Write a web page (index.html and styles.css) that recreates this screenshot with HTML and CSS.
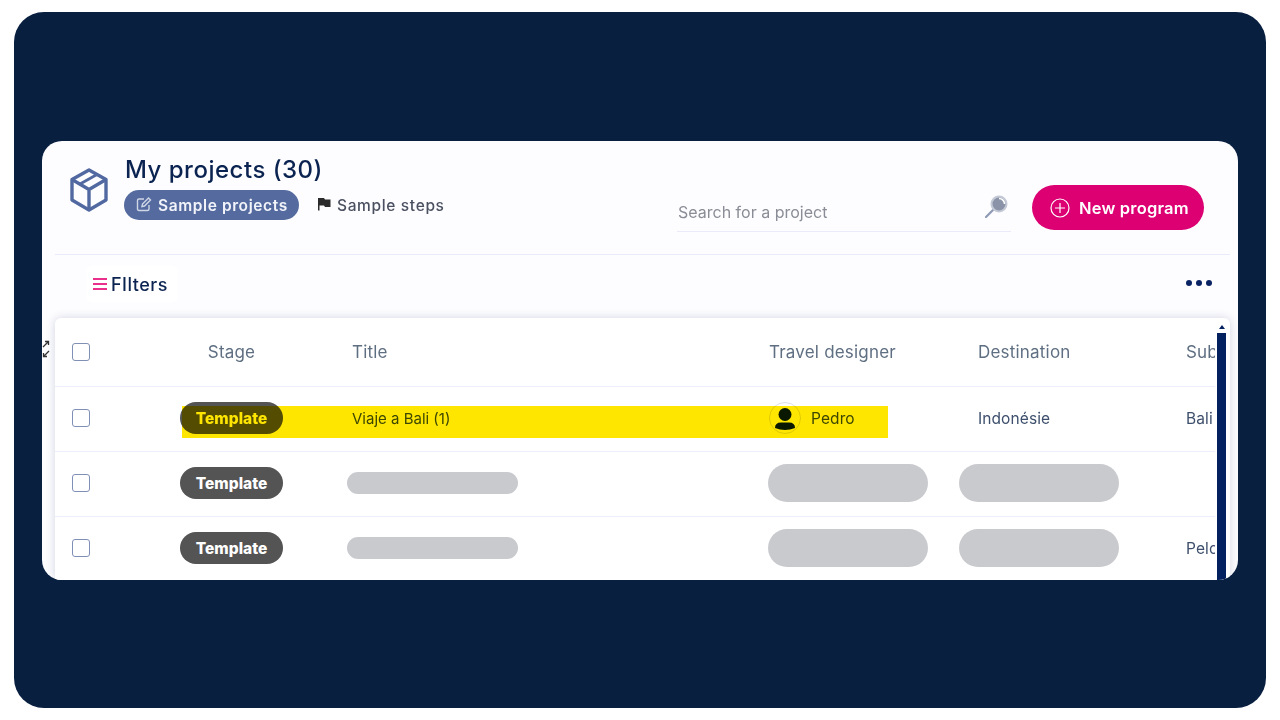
FILE: index.html

```html
<!DOCTYPE html>
<html lang="en">
<head>
  <meta charset="UTF-8" />
  <title>My projects</title>
  <link rel="stylesheet" href="styles.css">
</head>
<body>
  <div class="frame">
    <div class="card">
      <div class="header">
        <svg class="box-icon" viewBox="0 0 38 44" fill="none" stroke="#5169a0" stroke-width="3.400" stroke-linejoin="round">
          <path d="M19 2 L36 11.500 V32 L19 42 L2 32 V11.500 Z"/>
          <path d="M2 11.500 L19 21.500 L36 11.500 M19 21.500 V42"/>
          <path d="M10 16 L27 6.500" stroke-width="2.800"/>
        </svg>
        <div class="heading">
          <h1>My projects (30)</h1>
          <div class="tabs">
            <span class="tab active">
              <svg class="tab-icon" viewBox="0 0 16 16" fill="none" stroke="#cfd6e6" stroke-width="1.400">
                <path d="M13 9 V13 Q13 14.500 11.500 14.500 H3 Q1.500 14.500 1.500 13 V4.500 Q1.500 3 3 3 H8"/>
                <path d="M6 10.500 L6.500 8 L12.500 2 L14.500 4 L8.500 10 Z"/>
              </svg>
              Sample projects
            </span>
            <span class="tab">
              <svg class="flag-icon" viewBox="0 0 14 14"><path d="M1 1 H7 L8 2.500 H13.500 V10 H8 L7 8.500 H2.500 V13.500 H1 Z" fill="#2b2b2b"/></svg>
              Sample steps
            </span>
          </div>
        </div>
        <div class="search">
          <span class="search-text">Search for a project</span>
          <svg class="search-icon" viewBox="0 0 24 24" fill="none">
            <path d="M2 22 L10 14" stroke="#8d9ab5" stroke-width="2.200" stroke-linecap="round"/>
            <circle cx="15" cy="9" r="7.500" fill="#8b93a8" stroke="#c4c9d6" stroke-width="2"/>
            <path d="M15 3.500 A5.500 5.500 0 0 1 20.500 9" stroke="#fff" stroke-width="1.500"/>
          </svg>
        </div>
        <button class="new-btn">
          <svg class="plus-icon" viewBox="0 0 20 20" fill="none" stroke="#fff" stroke-width="1.200">
            <circle cx="10" cy="10" r="9"/>
            <path d="M10 5 V15 M5 10 H15"/>
          </svg>
          New program
        </button>
      </div>

      <div class="toolbar">
        <div class="filters">
          <span class="burger"><i></i><i></i><i></i></span>
          FIlters
        </div>
        <div class="dots"><i></i><i></i><i></i></div>
      </div>

      <div class="table-wrap">
        <span class="expand">
          <svg viewBox="0 0 8 18" fill="none" stroke="#333" stroke-width="1.300">
            <path d="M1 7 L6 2 M3 1.500 H6.500 V5"/>
            <path d="M7 11 L2 16 M5 16.500 H1.500 V13"/>
          </svg>
        </span>
        <div class="table">
          <div class="row head">
            <div class="cell"><span class="check"></span></div>
            <div class="cell center">Stage</div>
            <div class="cell">Title</div>
            <div class="cell">Travel designer</div>
            <div class="cell">Destination</div>
            <div class="cell sub">Subregion</div>
          </div>
          <div class="row">
            <div class="cell"><span class="check"></span></div>
            <div class="cell center"><span class="pill">Template</span></div>
            <div class="cell small">Viaje a Bali (1)</div>
            <div class="cell small wide">
              <svg class="avatar" viewBox="0 0 32 32">
                <circle cx="16" cy="16" r="15.500" fill="#fff" stroke="#c8cbd6" stroke-width="0.600"/>
                <circle cx="16" cy="12.500" r="6.500" fill="#0b1a0f"/>
                <path d="M6 26 Q6 20.500 12 20.500 H20 Q26 20.500 26 26 Q16 30 6 26 Z" fill="#0b1a0f"/>
              </svg>
              Pedro
            </div>
            <div class="cell small wide">Indonésie</div>
            <div class="cell sub small wide">Bali</div>
            <div class="highlight"></div>
          </div>
          <div class="row">
            <div class="cell"><span class="check"></span></div>
            <div class="cell center"><span class="pill">Template</span></div>
            <div class="cell"><span class="blank thin"></span></div>
            <div class="cell"><span class="blank designer-blank"></span></div>
            <div class="cell"><span class="blank dest-blank"></span></div>
            <div class="cell sub small wide"></div>
          </div>
          <div class="row">
            <div class="cell"><span class="check"></span></div>
            <div class="cell center"><span class="pill">Template</span></div>
            <div class="cell"><span class="blank thin"></span></div>
            <div class="cell"><span class="blank designer-blank"></span></div>
            <div class="cell"><span class="blank dest-blank"></span></div>
            <div class="cell sub small wide">Pelopor</div>
          </div>
        </div>
        <div class="scrollbar"><span class="arrow"></span><span class="thumb"></span></div>
      </div>
    </div>
  </div>
</body>
</html>
```

FILE: styles.css

```css
* {
  box-sizing: border-box;
}

body {
  margin: 0;
  height: 720px;
  background: #fff;
  font-family: Inter, "Liberation Sans", sans-serif;
  overflow: hidden;
}

.frame {
  margin: 12px 14px;
  height: 696px;
  background: #081f40;
  border-radius: 30px;
  padding: 129px 28px 0;
}

.card {
  height: 439px;
  background: #fdfdff;
  border-radius: 20px;
  overflow: hidden;
  padding: 0 8px 0 13px;
}

/* header */
.header {
  height: 114px;
  display: flex;
  border-bottom: 1px solid #e9ebfa;
}

.box-icon {
  width: 38px;
  height: 44px;
  margin: 27px 17px 0 15px;
  flex: none;
}

.heading {
  padding-top: 15px;
  width: 552px;
  flex: none;
}

h1 {
  margin: 0;
  font-size: 24px;
  line-height: 28px;
  font-weight: 500;
  letter-spacing: 0.5px;
  color: #0a2350;
}

.tabs {
  display: flex;
  align-items: center;
  gap: 18px;
  margin-top: 6px;
  margin-left: -1px;
}

.tab {
  display: flex;
  align-items: center;
  font-size: 15.500px;
  font-weight: 500;
  letter-spacing: 0.65px;
  color: #4a5060;
  height: 30px;
}

.tab.active {
  background: #556b9f;
  color: #f2f4fa;
  border-radius: 15px;
  padding: 0 12px;
  font-weight: 600;
  letter-spacing: 0.6px;
  width: 175px;
  white-space: nowrap;
}

.tab-icon {
  width: 16px;
  height: 16px;
  margin-right: 6px;
  margin-top: -2px;
  flex: none;
}

.flag-icon {
  width: 14px;
  height: 14px;
  margin-right: 6px;
  margin-top: -2px;
}

.search {
  width: 334px;
  height: 47px;
  margin-top: 44px;
  margin-right: 21px;
  border-bottom: 1px solid #e9ebfa;
  display: flex;
  justify-content: space-between;
  flex: none;
  padding: 0 3px 0 1px;
}

.search-text {
  font-size: 16px;
  color: #8a8d96;
  padding-top: 17px;
}

.search-icon {
  width: 24px;
  height: 24px;
  margin-top: 10px;
}

.new-btn {
  width: 172px;
  height: 45px;
  margin-top: 44px;
  background: #dc0073;
  border: none;
  border-radius: 23px;
  color: #fff;
  font: 600 16.500px Inter, "Liberation Sans", sans-serif;
  letter-spacing: 0.2px;
  display: flex;
  align-items: center;
  padding: 0 0 0 18px;
  white-space: nowrap;
}

.plus-icon {
  width: 20px;
  height: 20px;
  margin-right: 9px;
}

/* filters row */
.toolbar {
  height: 63px;
  display: flex;
  justify-content: space-between;
  padding: 11px 18px 0 31px;
}

.filters {
  width: 92px;
  height: 36px;
  background: #fff;
  border-radius: 6px;
  display: flex;
  align-items: center;
  padding-left: 7px;
  font-size: 18px;
  font-weight: 500;
  letter-spacing: 0.5px;
  color: #0a2350;
}

.burger {
  width: 14px;
  margin-right: 4px;
  display: flex;
  flex-direction: column;
  gap: 3px;
}

.burger i {
  height: 2px;
  background: #e8308c;
}

.dots {
  display: flex;
  gap: 4px;
  padding-top: 14px;
}

.dots i {
  width: 6px;
  height: 6px;
  border-radius: 50%;
  background: #0a2463;
}

/* table */
.table-wrap {
  position: relative;
  height: 262px;
  background: #fff;
  border-radius: 6px 6px 0 0;
  box-shadow: 0 0 10px rgba(40, 50, 110, 0.2);
  display: flex;
}

.expand {
  position: absolute;
  left: -13px;
  top: 22px;
  width: 8px;
  height: 18px;
}

.expand svg {
  display: block;
  width: 8px;
  height: 18px;
}

.table {
  width: 1160px;
  margin-right: 2px;
  flex: none;
  overflow: hidden;
}

.row {
  position: relative;
  display: grid;
  grid-template-columns: 56px 241px 417px 209px 208px 29px;
  height: 65px;
  padding-bottom: 2px;
  border-bottom: 1px solid #eceefb;
  font-size: 17px;
  letter-spacing: 0.2px;
  color: #5f6f82;
}

.row.head {
  height: 69px;
  padding-bottom: 0;
}

.cell {
  display: flex;
  align-items: center;
  white-space: nowrap;
}

.cell:first-child {
  padding-left: 17px;
}

.center {
  justify-content: center;
}

.sub {
  overflow: hidden;
}

.small {
  font-size: 15px;
  letter-spacing: 0;
  color: #3d4f6c;
}

.wide {
  font-size: 15.500px;
  letter-spacing: 0.1px;
}

.check {
  width: 18px;
  height: 18px;
  border: 1.500px solid #7f8fb5;
  border-radius: 3px;
  background: #fff;
  flex: none;
}

.pill {
  width: 103px;
  height: 32px;
  border-radius: 16px;
  background: #545454;
  color: #fff;
  font-size: 15.500px;
  font-weight: 800;
  letter-spacing: 0;
  display: flex;
  align-items: center;
  justify-content: center;
}

.blank {
  width: 160px;
  height: 38px;
  border-radius: 19px;
  background: #c9cace;
  flex: none;
}

.blank.thin {
  width: 171px;
  height: 22px;
  border-radius: 11px;
  margin-left: -5px;
}

.designer-blank {
  margin-left: -1px;
}

.dest-blank {
  margin-left: -19px;
}

.avatar {
  width: 32px;
  height: 32px;
  margin-right: 10px;
  flex: none;
}

/* marker stroke over the first row */
.highlight {
  position: absolute;
  left: 127px;
  top: 19px;
  width: 706px;
  height: 32px;
  background: #ffe600;
  mix-blend-mode: multiply;
}

.scrollbar {
  width: 9px;
  display: flex;
  flex-direction: column;
  align-items: center;
  padding-top: 7px;
}

.arrow {
  width: 0;
  height: 0;
  border-left: 3.500px solid transparent;
  border-right: 3.500px solid transparent;
  border-bottom: 4px solid #03205f;
}

.thumb {
  width: 9px;
  flex: 1;
  margin-top: 4px;
  background: #03205f;
}
```
